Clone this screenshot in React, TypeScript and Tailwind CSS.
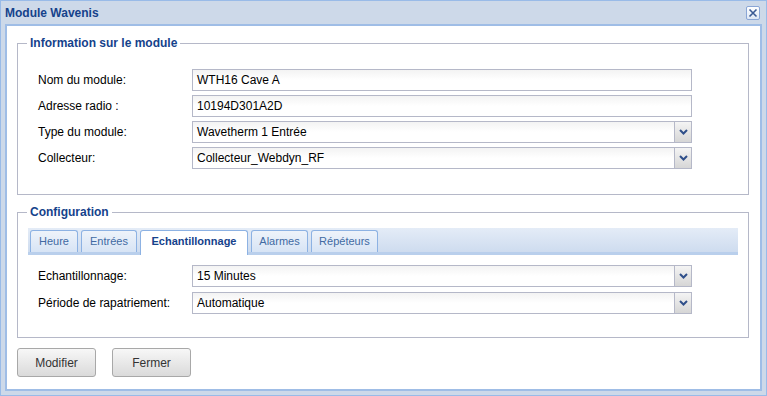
import React from "react";

const Chevron = () => (
  <svg width="9" height="6" viewBox="0 0 9 6">
    <path d="M1 1 L4.5 4.5 L8 1" fill="none" stroke="#2f4f8a" strokeWidth="2" />
  </svg>
);

const TextField = ({ value }: { value: string }) => (
  <div className="w-[500px] h-[22px] border border-[#b5b8c8] bg-gradient-to-b from-[#f3f3f3] via-white to-white flex items-center pl-[4px] text-[12px] text-black">
    {value}
  </div>
);

const SelectField = ({ value }: { value: string }) => (
  <div className="w-[500px] h-[22px] border border-[#b5b8c8] bg-gradient-to-b from-[#f3f3f3] via-white to-white flex items-center text-[12px] text-black">
    <span className="flex-1 pl-[4px]">{value}</span>
    <div className="w-[17px] h-full border-l border-[#b5b8c8] bg-gradient-to-b from-[#f4f4f4] to-[#d6d6d6] flex items-center justify-center">
      <Chevron />
    </div>
  </div>
);

const Row = ({ label, children }: { label: string; children: React.ReactNode }) => (
  <div className="flex items-center h-[22px]">
    <span className="w-[154px] text-[12px] text-black">{label}</span>
    {children}
  </div>
);

const tabs = [
  { name: "Heure", w: "w-[48px]" },
  { name: "Entrées", w: "w-[56px]" },
  { name: "Echantillonnage", w: "w-[108px]", active: true },
  { name: "Alarmes", w: "w-[57px]" },
  { name: "Répéteurs", w: "w-[67px]" },
];

export default function App() {
  return (
    <div className="w-[767px] h-[396px] bg-[#cdd9e9] border border-[#99bbe8] flex flex-col px-[4px] pb-[4px] font-['Liberation_Sans',Arial,sans-serif]">
      {/* title bar */}
      <div className="h-[23px] flex items-center justify-between shrink-0">
        <span className="text-[12px] font-bold text-[#15428b] leading-none">Module Wavenis</span>
        <div className="w-[14px] h-[14px] mr-[2px] rounded-[2px] border border-[#8aa6d6] bg-gradient-to-b from-white to-[#dde7f5] flex items-center justify-center">
          <svg width="10" height="10" viewBox="0 0 10 10">
            <path d="M1.5 1.5 L8.5 8.5 M8.5 1.5 L1.5 8.5" stroke="#3a5a94" strokeWidth="1.6" />
          </svg>
        </div>
      </div>

      {/* body */}
      <div className="flex-1 bg-white border-2 border-[#9fbde6] pl-[10px] pt-[10px]">
        <fieldset className="w-[732px] border border-[#b5b8c8] pt-[19px] pb-[25px]">
          <legend className="ml-[9px] px-[3px] text-[12px] leading-[14px] font-bold text-[#15428b]">
            Information sur le module
          </legend>
          <div className="flex flex-col gap-[4px] pl-[20px]">
            <Row label="Nom du module:">
              <TextField value="WTH16 Cave A" />
            </Row>
            <Row label="Adresse radio :">
              <TextField value="10194D301A2D" />
            </Row>
            <Row label="Type du module:">
              <SelectField value="Wavetherm 1 Entrée" />
            </Row>
            <Row label="Collecteur:">
              <SelectField value="Collecteur_Webdyn_RF" />
            </Row>
          </div>
        </fieldset>

        <fieldset className="w-[732px] mt-[10px] border border-[#b5b8c8] pt-[9px] pb-[23px]">
          <legend className="ml-[9px] px-[3px] text-[12px] leading-[14px] font-bold text-[#15428b]">
            Configuration
          </legend>
          <div className="mx-[10px] h-[27px] bg-gradient-to-b from-[#e4ecf7] to-[#cedcef] border-b-[3px] border-[#b9cfec] flex items-end pl-[2px] gap-[3px]">
            {tabs.map((t) =>
              t.active ? (
                <div
                  key={t.name}
                  className={`${t.w} h-[25px] bg-white border border-b-0 border-[#8db2e3] rounded-t-[3px] flex items-center justify-center text-[11px] font-bold text-[#15428b] -mb-[3px] pb-[3px]`}
                >
                  {t.name}
                </div>
              ) : (
                <div
                  key={t.name}
                  className={`${t.w} h-[22px] bg-gradient-to-b from-[#eef3fa] to-[#d7e4f5] border border-b-0 border-[#8db2e3] rounded-t-[3px] flex items-center justify-center text-[11px] text-[#416aa3]`}
                >
                  {t.name}
                </div>
              )
            )}
          </div>
          <div className="flex flex-col gap-[5px] mt-[10px] pl-[20px]">
            <Row label="Echantillonnage:">
              <SelectField value="15 Minutes" />
            </Row>
            <Row label="Période de rapatriement:">
              <SelectField value="Automatique" />
            </Row>
          </div>
        </fieldset>

        <div className="flex gap-[16px] mt-[10px]">
          <button className="w-[79px] h-[29px] rounded-[3px] border border-[#a8a8a8] bg-gradient-to-b from-[#f7f7f7] to-[#dadada] text-[12px] text-[#333]">
            Modifier
          </button>
          <button className="w-[79px] h-[29px] rounded-[3px] border border-[#a8a8a8] bg-gradient-to-b from-[#f7f7f7] to-[#dadada] text-[12px] text-[#333]">
            Fermer
          </button>
        </div>
      </div>
    </div>
  );
}
